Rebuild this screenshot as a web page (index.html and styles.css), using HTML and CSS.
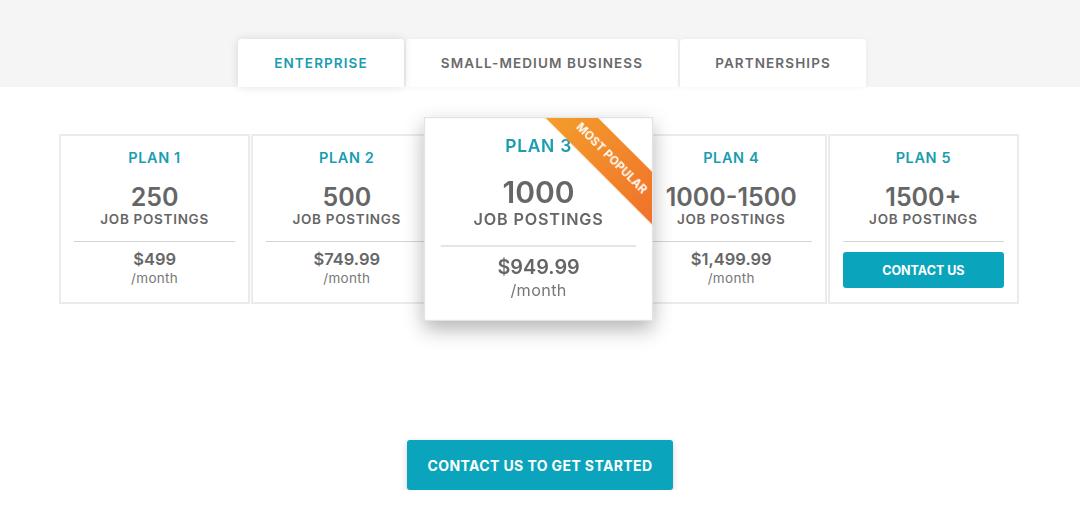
FILE: index.html
```html
<!DOCTYPE html>
<html lang="en">
<head>
<meta charset="utf-8">
<title>Pricing</title>
<link rel="stylesheet" href="styles.css">
</head>
<body>
<header class="band">
  <nav class="tabs">
    <div class="tab tab-active">ENTERPRISE</div>
    <div class="tab">SMALL-MEDIUM BUSINESS</div>
    <div class="tab">PARTNERSHIPS</div>
  </nav>
</header>
<main class="main">
  <section class="plans">
    <div class="card">
      <div class="plan-name">PLAN 1</div>
      <div class="plan-count">250</div>
      <div class="plan-unit">JOB POSTINGS</div>
      <div class="divider"></div>
      <div class="plan-price">$499</div>
      <div class="plan-period">/month</div>
    </div>
    <div class="card">
      <div class="plan-name">PLAN 2</div>
      <div class="plan-count">500</div>
      <div class="plan-unit">JOB POSTINGS</div>
      <div class="divider"></div>
      <div class="plan-price">$749.99</div>
      <div class="plan-period">/month</div>
    </div>
    <div class="card card-featured">
      <div class="ribbon">MOST POPULAR</div>
      <div class="plan-name">PLAN 3</div>
      <div class="plan-count">1000</div>
      <div class="plan-unit">JOB POSTINGS</div>
      <div class="divider"></div>
      <div class="plan-price">$949.99</div>
      <div class="plan-period">/month</div>
    </div>
    <div class="card">
      <div class="plan-name">PLAN 4</div>
      <div class="plan-count">1000-1500</div>
      <div class="plan-unit">JOB POSTINGS</div>
      <div class="divider"></div>
      <div class="plan-price">$1,499.99</div>
      <div class="plan-period">/month</div>
    </div>
    <div class="card">
      <div class="plan-name">PLAN 5</div>
      <div class="plan-count">1500+</div>
      <div class="plan-unit">JOB POSTINGS</div>
      <div class="divider"></div>
      <a class="card-button" href="#">CONTACT US</a>
    </div>
  </section>
  <div class="cta-row">
    <a class="cta" href="#">CONTACT US TO GET STARTED</a>
  </div>
</main>
</body>
</html>
```

FILE: styles.css
```css
* { box-sizing: border-box; }

html, body {
  margin: 0;
  padding: 0;
  background: #ffffff;
  font-family: Inter, "Open Sans", "Liberation Sans", sans-serif;
  color: #666666;
}

.band {
  background: #f5f5f5;
  height: 87px;
  padding-top: 39px;
}

.tabs {
  display: flex;
  justify-content: center;
  gap: 2px;
  padding-left: 24px;
}

.tab {
  height: 48px;
  display: flex;
  align-items: center;
  justify-content: center;
  background: #ffffff;
  border-radius: 4px 4px 0 0;
  font-size: 13.5px;
  font-weight: 600;
  color: #6a6a6a;
  letter-spacing: 1.1px;
  box-shadow: 0 0 6px rgba(0, 0, 0, 0.05);
  position: relative;
}

.tab:nth-child(1) { width: 166px; }
.tab:nth-child(2) { width: 272px; }
.tab:nth-child(3) { width: 186px; }

.tab-active {
  color: #1a9db1;
  box-shadow: 0 0 10px rgba(0, 0, 0, 0.12);
  z-index: 2;
}

.main {
  padding-top: 47px;
}

.plans {
  width: 962px;
  margin: 0 auto;
  padding-right: 2px;
  display: grid;
  grid-template-columns: repeat(5, 1fr);
  gap: 1px;
}

.card {
  height: 170px;
  border: 2px solid #ebebeb;
  background: #ffffff;
  padding: 13px 13px 0;
  display: flex;
  flex-direction: column;
  align-items: center;
  position: relative;
}

.card-featured {
  transform: scale(1.2);
  z-index: 3;
  border: 1px solid #e3e3e3;
  padding-top: 14px;
  overflow: hidden;
  box-shadow: 0 7px 16px rgba(0, 0, 0, 0.3);
}

.plan-name {
  font-size: 14.5px;
  line-height: 18px;
  font-weight: 600;
  color: #1a9db1;
  letter-spacing: 0.6px;
}

.plan-count {
  margin-top: 17px;
  font-size: 25px;
  line-height: 26px;
  font-weight: 600;
  color: #666666;
}

.plan-unit {
  margin-top: 1px;
  font-size: 13.5px;
  line-height: 16px;
  font-weight: 600;
  color: #666666;
  letter-spacing: 0.7px;
}

.divider {
  align-self: stretch;
  height: 1px;
  background: #d4d4d4;
  margin-top: 14px;
}

.plan-price {
  margin-top: 7px;
  font-size: 16.5px;
  line-height: 20px;
  font-weight: 600;
  color: #666666;
}

.plan-period {
  margin-top: 1px;
  font-size: 13.5px;
  line-height: 16px;
  font-weight: 400;
  color: #777777;
  letter-spacing: 0.3px;
}

.card-button {
  align-self: stretch;
  margin-top: 10px;
  height: 36px;
  border-radius: 3px;
  background: #0aa5bc;
  color: #ffffff;
  text-decoration: none;
  font-size: 12.5px;
  font-weight: 700;
  display: flex;
  align-items: center;
  justify-content: center;
}

.ribbon {
  position: absolute;
  width: 150px;
  height: 31px;
  left: 80px;
  top: 17px;
  transform: rotate(45deg);
  background: linear-gradient(90deg, #f4a22c, #f06d29);
  color: #ffffff;
  font-size: 9.5px;
  font-weight: 700;
  display: flex;
  align-items: center;
  justify-content: center;
  padding-left: 2px;
  letter-spacing: 0.2px;
}

.cta-row {
  display: flex;
  justify-content: center;
  padding-top: 136px;
}

.cta {
  width: 266px;
  height: 50px;
  border-radius: 3px;
  background: #0aa5bc;
  color: #ffffff;
  text-decoration: none;
  font-size: 14px;
  font-weight: 700;
  letter-spacing: 0.4px;
  display: flex;
  align-items: center;
  justify-content: center;
  box-shadow: 0 2px 6px rgba(0, 0, 0, 0.18);
}
```
